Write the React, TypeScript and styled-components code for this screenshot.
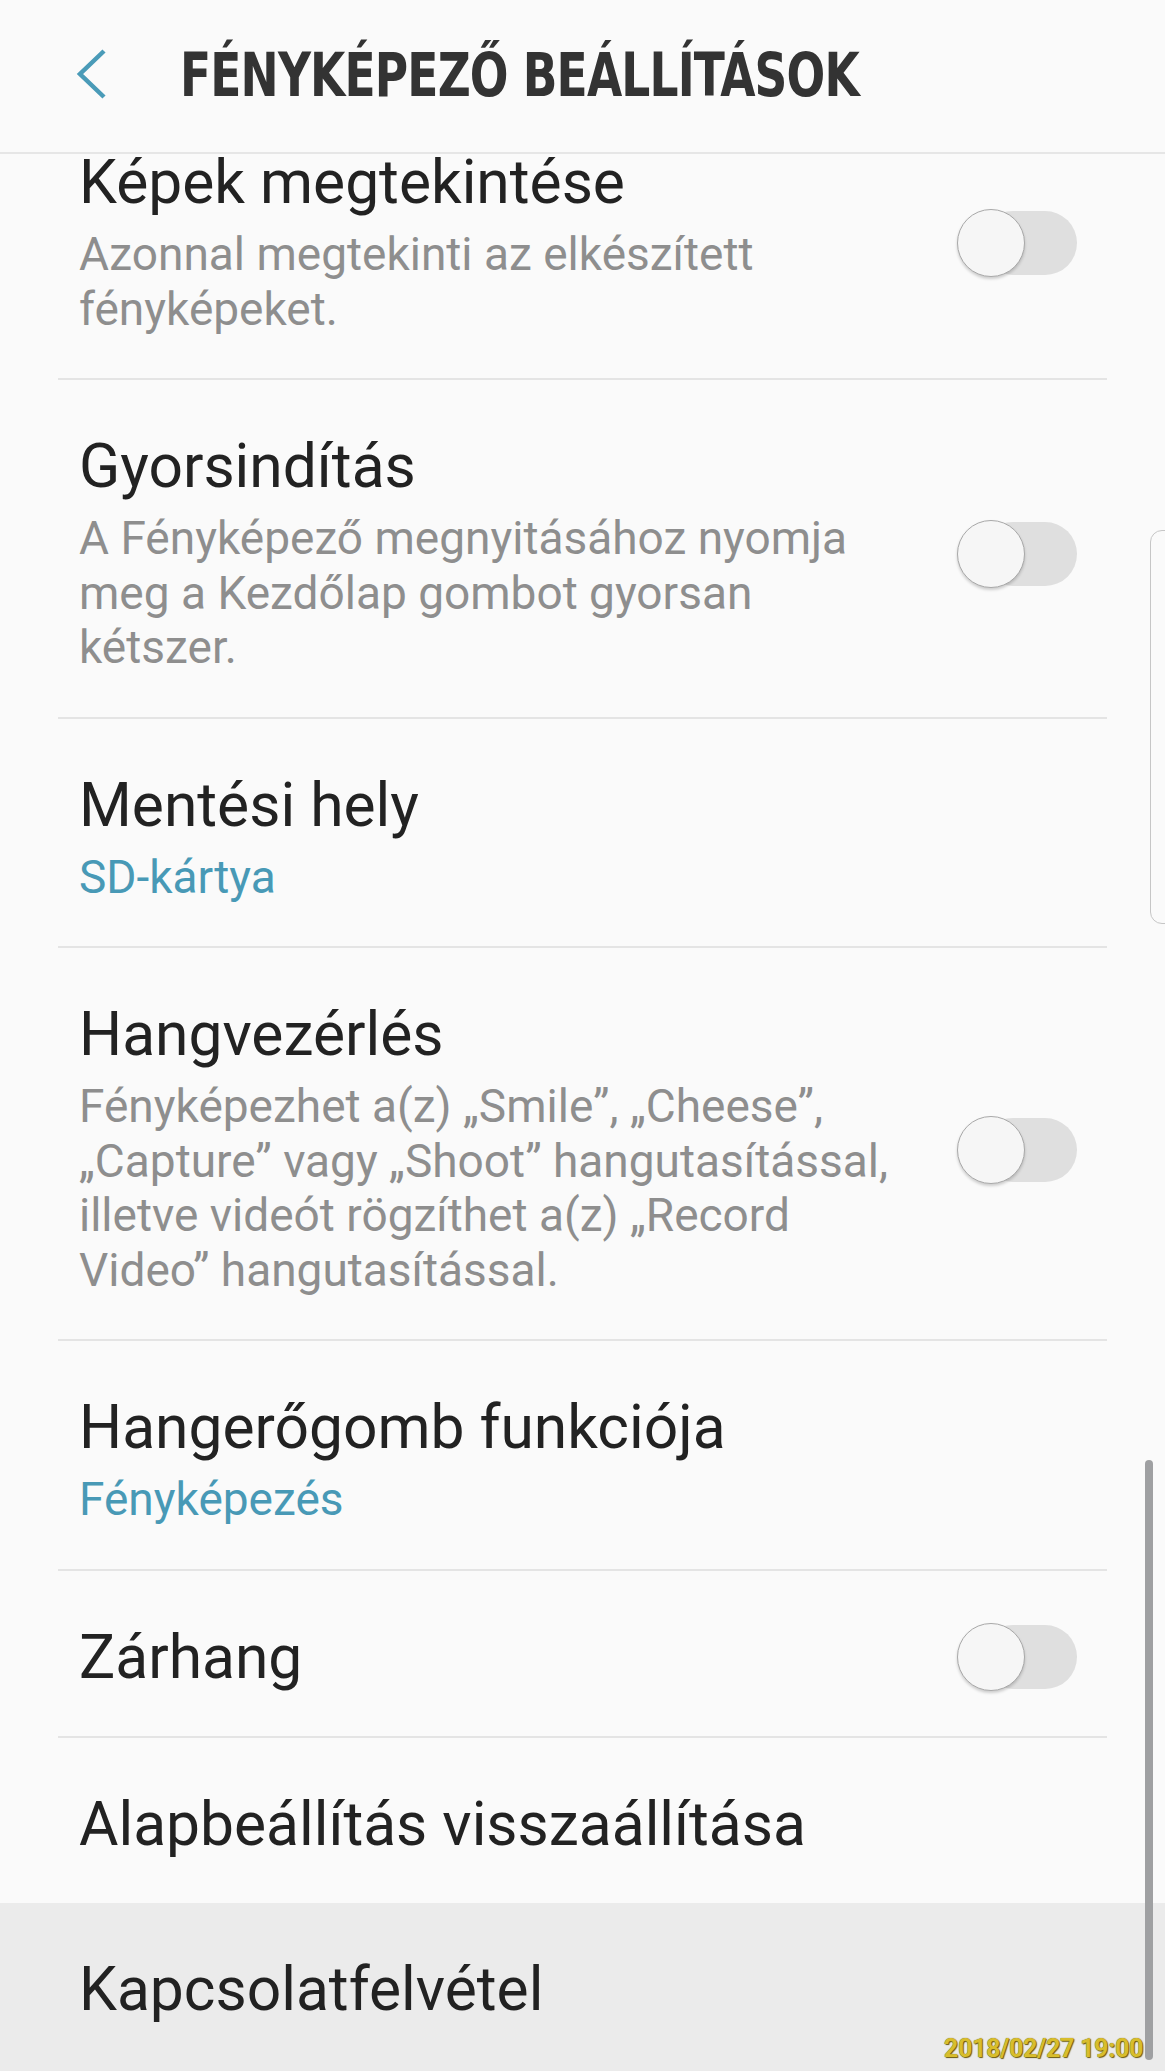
import React from 'react';
import styled, { createGlobalStyle } from 'styled-components';

const GlobalStyle = createGlobalStyle`
  html, body {
    margin: 0;
    padding: 0;
    background: #fafafa;
  }
  body {
    font-family: Roboto, 'Noto Sans', sans-serif;
    -webkit-font-smoothing: antialiased;
  }
`;

const Screen = styled.div`
  position: relative;
  width: 1165px;
  height: 2071px;
  display: flex;
  flex-direction: column;
  background: #fafafa;
  overflow: hidden;
`;

const Header = styled.header`
  height: 152px;
  flex: none;
  display: flex;
  align-items: center;
  padding: 0 0 0 66px;
  border-bottom: 2px solid #e6e6e6;
  background: #fafafa;
  position: relative;
  z-index: 2;
`;

const BackButton = styled.button`
  width: 50px;
  height: 60px;
  padding: 0;
  margin: 0 64px 4px 0;
  border: none;
  background: transparent;
  display: flex;
  align-items: center;
  justify-content: center;
  cursor: pointer;
`;

const Title = styled.h1`
  margin: 0 0 4px;
  font-family: 'DejaVu Sans Condensed', 'Roboto Condensed', Roboto, sans-serif;
  font-weight: 700;
  font-size: 61px;
  letter-spacing: -1px;
  color: #333333;
  white-space: nowrap;
  transform: scaleX(0.83);
  transform-origin: left center;
`;

const ListViewport = styled.div`
  flex: 1;
  overflow: hidden;
  display: flex;
  flex-direction: column;
`;

// the list is scrolled down a little, so the first row sits under the header
const List = styled.div`
  margin-top: -58px;
  flex: 1;
  display: flex;
  flex-direction: column;
`;

const Row = styled.div<{ $active?: boolean }>`
  display: flex;
  align-items: stretch;
  padding: 0 58px;
  background: ${(p) => (p.$active ? '#ebebeb' : 'transparent')};
  flex: ${(p) => (p.$active ? '1 0 auto' : 'none')};
`;

const RowInner = styled.div<{ $last?: boolean; $hasSub?: boolean }>`
  flex: 1;
  display: flex;
  align-items: center;
  padding: 54px 0 ${(p) => (p.$hasSub ? 42 : 46)}px 21px;
  border-bottom: ${(p) => (p.$last ? 'none' : '2px solid #e4e4e4')};
`;

const ActiveInner = styled(RowInner)`
  align-items: flex-start;
`;

const TextBlock = styled.div`
  display: flex;
  flex-direction: column;
  max-width: 822px;
`;

const RowTitle = styled.div`
  font-size: 60.5px;
  line-height: 65px;
  color: #222222;
  white-space: nowrap;
`;

const RowSub = styled.div<{ $accent?: boolean }>`
  margin-top: 12px;
  font-size: 46px;
  line-height: 54.5px;
  color: ${(p) => (p.$accent ? '#4899b6' : '#8e8e8e')};
`;

const Track = styled.div`
  position: relative;
  flex: none;
  width: 120px;
  height: 68px;
  margin: -10px 30px -10px auto;
  &::before {
    content: '';
    position: absolute;
    left: 24px;
    right: 0;
    top: 2px;
    bottom: 2px;
    border-radius: 32px;
    background: #dfdfdf;
  }
`;

const Knob = styled.div`
  position: absolute;
  left: 0;
  top: 0;
  width: 66px;
  height: 66px;
  border-radius: 50%;
  background: #f6f6f6;
  border: 1.5px solid #a9a9a9;
  box-shadow: 0 2px 3px rgba(0, 0, 0, 0.18);
`;

const EdgeHandle = styled.div`
  position: absolute;
  left: 1150px;
  top: 530px;
  width: 40px;
  height: 392px;
  border: 1.5px solid #c6c6c6;
  border-radius: 12px;
  z-index: 3;
`;

const ScrollBar = styled.div`
  position: absolute;
  left: 1145px;
  top: 1460px;
  width: 8px;
  height: 600px;
  border-radius: 4px;
  background: #9fa0a2;
  z-index: 3;
`;

const Stamp = styled.div`
  position: absolute;
  right: 22px;
  bottom: 8px;
  font-family: Roboto, sans-serif;
  font-weight: 700;
  font-size: 25px;
  letter-spacing: -0.3px;
  color: #d8bd2c;
  text-shadow: 0 0 1px #6b5a0c, 1px 1px 1px #6b5a0c;
  z-index: 4;
`;

type Setting = {
  title: string;
  sub?: string;
  accent?: boolean;
  toggle?: boolean;
  active?: boolean;
};

const settings: Setting[] = [
  { title: 'Képek megtekintése', sub: 'Azonnal megtekinti az elkészített fényképeket.', toggle: true },
  {
    title: 'Gyorsindítás',
    sub: 'A Fényképező megnyitásához nyomja meg a Kezdőlap gombot gyorsan kétszer.',
    toggle: true,
  },
  { title: 'Mentési hely', sub: 'SD-kártya', accent: true },
  {
    title: 'Hangvezérlés',
    sub: 'Fényképezhet a(z) „Smile”, „Cheese”, „Capture” vagy „Shoot” hangutasítással, illetve videót rögzíthet a(z) „Record Video” hangutasítással.',
    toggle: true,
  },
  { title: 'Hangerőgomb funkciója', sub: 'Fényképezés', accent: true },
  { title: 'Zárhang', toggle: true },
  { title: 'Alapbeállítás visszaállítása' },
  { title: 'Kapcsolatfelvétel', active: true },
];

const Chevron = () => (
  <svg width="40" height="56" viewBox="0 0 40 56">
    <polyline points="33,5 9,28 33,51" fill="none" stroke="#4a9bb8" strokeWidth="4.5" />
  </svg>
);

const Toggle = () => (
  <Track>
    <Knob />
  </Track>
);

export default function App() {
  return (
    <Screen>
      <GlobalStyle />
      <Header>
        <BackButton aria-label="Vissza">
          <Chevron />
        </BackButton>
        <Title>FÉNYKÉPEZŐ BEÁLLÍTÁSOK</Title>
      </Header>
      <ListViewport>
        <List>
          {settings.map((s, i) => {
            const Inner = s.active ? ActiveInner : RowInner;
            return (
              <Row key={s.title} $active={s.active}>
                <Inner $last={i >= settings.length - 2} $hasSub={!!s.sub}>
                  <TextBlock>
                    <RowTitle>{s.title}</RowTitle>
                    {s.sub && <RowSub $accent={s.accent}>{s.sub}</RowSub>}
                  </TextBlock>
                  {s.toggle && <Toggle />}
                </Inner>
              </Row>
            );
          })}
        </List>
      </ListViewport>
      <EdgeHandle />
      <ScrollBar />
      <Stamp>2018/02/27 19:00</Stamp>
    </Screen>
  );
}
